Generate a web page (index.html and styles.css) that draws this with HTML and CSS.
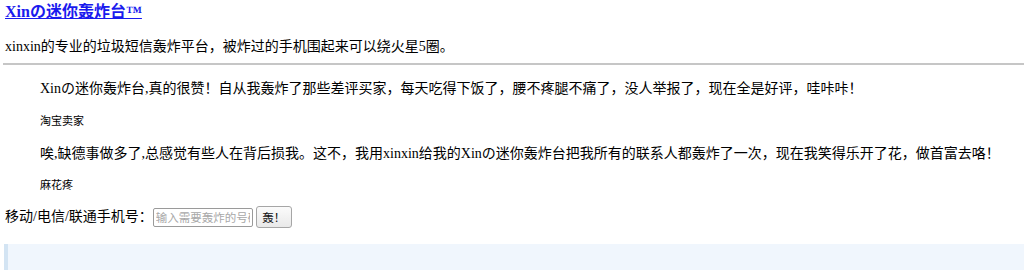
FILE: index.html
```html
<!DOCTYPE html>
<html lang="zh">
<head>
<meta charset="utf-8">
<title>Xinの迷你轰炸台™</title>
<link rel="stylesheet" href="styles.css">
</head>
<body>
<div class="page">
  <h3 class="title"><a href="#">Xinの迷你轰炸台™</a></h3>
  <p class="intro">xinxin的专业的垃圾短信轰炸平台，被炸过的手机围起来可以绕火星5圈。</p>
  <hr class="rule">
  <blockquote class="quotes">
    <p class="quote">Xinの迷你轰炸台,真的很赞！自从我轰炸了那些差评买家，每天吃得下饭了，腰不疼腿不痛了，没人举报了，现在全是好评，哇咔咔！</p>
    <p class="cite">淘宝卖家</p>
    <p class="quote q2">唉,缺德事做多了,总感觉有些人在背后损我。这不，我用xinxin给我的Xinの迷你轰炸台把我所有的联系人都轰炸了一次，现在我笑得乐开了花，做首富去咯！</p>
    <p class="cite">麻花疼</p>
  </blockquote>
  <form class="form" onsubmit="return false">
    <label class="label" for="phone">移动/电信/联通手机号：</label>
    <input class="phone" id="phone" type="text" placeholder="输入需要轰炸的号码">
    <button class="btn" type="submit">轰！</button>
  </form>
  <div class="note"></div>
</div>
</body>
</html>
```

FILE: styles.css
```css
html, body {
  margin: 0;
  padding: 0;
  background: #fff;
}
body {
  font-family: "Liberation Serif", "Noto Sans CJK SC", serif;
  color: #000;
  font-size: 14px;
}
.page {
  padding: 0 0 0 5px;
  overflow: hidden;
}
.title {
  margin: 0;
  font-size: 16px;
  line-height: 24px;
  font-weight: bold;
}
.title a {
  color: #1a1aee;
  text-decoration: underline;
}
.intro {
  margin: 13px 0 0 0;
  line-height: 20px;
}
.rule {
  margin: 6px 0 0 -2px;
  border: 0;
  height: 2px;
  background: #c6c6c6;
}
.quotes {
  margin: 0 0 0 35px;
  padding: 0;
}
.quote {
  margin: 14px 0 0 0;
  line-height: 20px;
  white-space: nowrap;
}
.quote.q2 {
  margin-top: 15px;
}
.cite {
  margin: 14px 0 0 0;
  font-size: 11px;
  line-height: 16px;
}
.quote.q2 + .cite {
  margin-top: 13px;
}
.form {
  margin: 13px 0 0 0;
  display: flex;
  align-items: center;
  height: 22px;
}
.label {
  font-size: 14px;
  line-height: 20px;
}
.phone {
  box-sizing: border-box;
  width: 100px;
  height: 19px;
  margin: 0;
  padding: 0 2px;
  border: 1px solid #9a9a9a;
  border-radius: 2px;
  font-family: "Noto Sans CJK SC", sans-serif;
  font-size: 11.5px;
  background: #fff;
}
.phone::placeholder {
  color: #a8a8a8;
}
.btn {
  box-sizing: border-box;
  width: 36px;
  height: 22px;
  margin: 0 0 0 3px;
  padding: 0;
  border: 1px solid #a6a6a6;
  border-radius: 3px;
  background: linear-gradient(#fbfbfb, #e9e9e9);
  font-family: "Noto Sans CJK SC", sans-serif;
  font-size: 11.5px;
  color: #111;
}
.note {
  margin: 16px 0 0 -1px;
  height: 26px;
  background: #f0f6fd;
  border-left: 4px solid #d3e4f3;
}
```
